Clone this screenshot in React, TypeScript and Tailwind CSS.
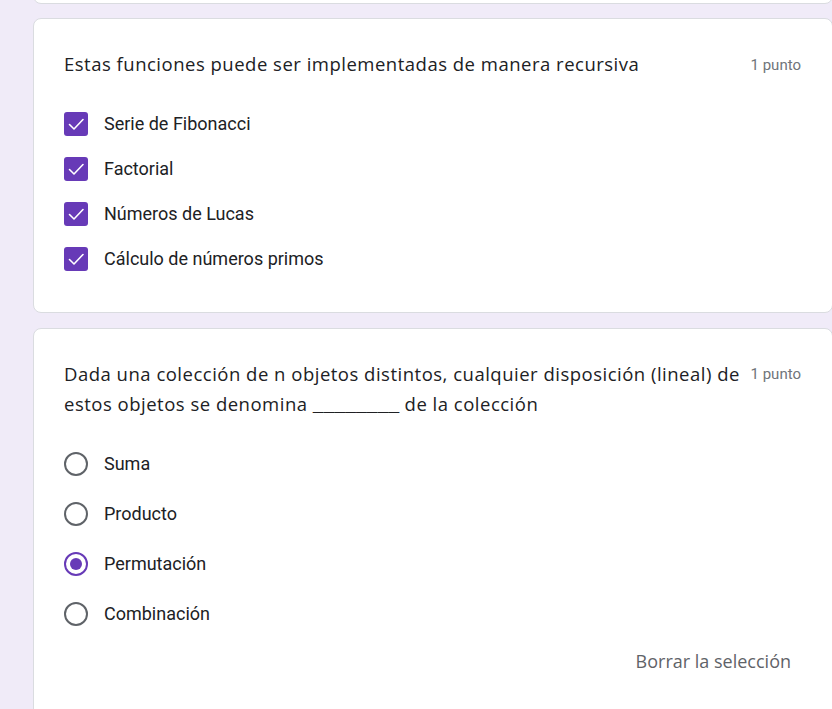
import React from "react";

const Check = () => (
  <svg width="24" height="24" viewBox="0 0 24 24" className="shrink-0">
    <rect x="0" y="0" width="24" height="24" rx="3" fill="#673ab7" />
    <path d="M5.5 12.5 L10 17 L19 7.5" fill="none" stroke="#ffffff" strokeWidth="1.6" strokeLinecap="round" strokeLinejoin="round" />
  </svg>
);

const Radio = ({ checked }: { checked?: boolean }) => (
  <svg width="24" height="24" viewBox="0 0 24 24" className="shrink-0">
    <circle cx="12" cy="12" r="11" fill="none" stroke={checked ? "#673ab7" : "#5f6368"} strokeWidth="2" />
    {checked && <circle cx="12" cy="12" r="6" fill="#673ab7" />}
  </svg>
);

const titleFont = { fontFamily: "'Open Sans', Roboto, sans-serif" } as React.CSSProperties;

export default function App() {
  const checks = ["Serie de Fibonacci", "Factorial", "Números de Lucas", "Cálculo de números primos"];
  const radios = ["Suma", "Producto", "Permutación", "Combinación"];
  return (
    <div className="h-[709px] w-[832px] overflow-hidden bg-[#f0ebf8] text-[#202124]" style={{ fontFamily: "Roboto, 'Liberation Sans', sans-serif" }}>
      <div className="ml-[33px] -mt-[20px] h-[24px] w-[800px] rounded-lg border border-[#dadce0] bg-white" />
      <div className="ml-[33px] mt-[14px] w-[800px] rounded-lg border border-[#dadce0] bg-white pl-[30px] pr-[31px] pt-[33px] pb-[31px]">
        <div className="flex items-start justify-between">
          <div className="text-[18.5px] leading-[24px] tracking-[0.5px] text-[#202124]" style={titleFont}>
            Estas funciones puede ser implementadas de manera recursiva
          </div>
          <div className="pt-[1px] text-[15px] leading-[24px] text-[#70757a]">1 punto</div>
        </div>
        <div className="mt-[24px] flex flex-col">
          {checks.map((c) => (
            <div key={c} className="flex h-[45px] items-center gap-[16px]">
              <Check />
              <span className="text-[18px] leading-[24px]">{c}</span>
            </div>
          ))}
        </div>
      </div>
      <div className="ml-[33px] mt-[15px] h-[420px] w-[800px] rounded-lg border border-[#dadce0] bg-white pl-[30px] pr-[31px] pt-[30px]">
        <div className="flex items-start justify-between">
          <div className="h-[60px] text-[18.5px] leading-[30px] tracking-[0.5px] text-[#202124]" style={titleFont}>
            Dada una colección de n objetos distintos, cualquier disposición (lineal) de
            <br />
            estos objetos se denomina{" "}
            <span className="tracking-normal leading-none font-['Liberation_Mono',monospace] text-[18px]">________</span>{" "}
            de la colección
          </div>
          <div className="pt-[3px] text-[15px] leading-[24px] text-[#70757a]">1 punto</div>
        </div>
        <div className="mt-[20px] flex flex-col">
          {radios.map((r, i) => (
            <div key={r} className="flex h-[50px] items-center gap-[16px]">
              <Radio checked={i === 2} />
              <span className="text-[18px] leading-[24px]">{r}</span>
            </div>
          ))}
        </div>
        <div className="flex justify-end pr-[10px] pt-[9px]">
          <span className="text-[18px] font-medium leading-[26px] text-[#5f6368]" style={titleFont}>
            Borrar la selección
          </span>
        </div>
      </div>
    </div>
  );
}
